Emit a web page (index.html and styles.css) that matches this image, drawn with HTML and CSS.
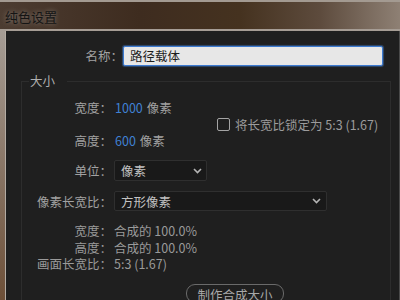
FILE: index.html
```html
<!DOCTYPE html>
<html lang="zh-CN">
<head>
  <meta charset="UTF-8">
  <title>纯色设置</title>
  <link rel="stylesheet" href="styles.css">
</head>
<body>
  <div class="window">
    <div class="titlebar">纯色设置</div>
    <div class="frame">
      <div class="dialog">
        <div class="name-row">
          <span class="label name-label">名称：</span>
          <div class="text-input">路径载体</div>
        </div>

        <fieldset class="group">
          <legend>大小</legend>

          <div class="dims-block">
            <div class="dims">
              <div class="row dim-row">
                <span class="label">宽度：</span>
                <span class="num">1000</span>
                <span class="unit">像素</span>
              </div>
              <div class="row dim-row">
                <span class="label">高度：</span>
                <span class="num">600</span>
                <span class="unit">像素</span>
              </div>
            </div>
            <label class="lock">
              <span class="checkbox"></span>
              将长宽比锁定为 5:3 (1.67)
            </label>
          </div>

          <div class="row unit-row">
            <span class="label">单位：</span>
            <div class="select select-unit">
              <span>像素</span>
              <svg width="9" height="6" viewBox="0 0 9 6"><path d="M1 1l3.5 3.5L8 1" stroke="#b4b4b4" stroke-width="1.6" fill="none"/></svg>
            </div>
          </div>

          <div class="row aspect-row">
            <span class="label">像素长宽比：</span>
            <div class="select select-aspect">
              <span>方形像素</span>
              <svg width="9" height="6" viewBox="0 0 9 6"><path d="M1 1l3.5 3.5L8 1" stroke="#b4b4b4" stroke-width="1.6" fill="none"/></svg>
            </div>
          </div>

          <div class="info">
            <div class="info-row"><span class="label">宽度：</span><span>合成的 100.0%</span></div>
            <div class="info-row"><span class="label">高度：</span><span>合成的 100.0%</span></div>
            <div class="info-row"><span class="label">画面长宽比：</span><span>5:3 (1.67)</span></div>
          </div>

          <button class="btn">制作合成大小</button>
        </fieldset>
      </div>
    </div>
  </div>
</body>
</html>
```

FILE: styles.css
```css
* {
  margin: 0;
  padding: 0;
  box-sizing: border-box;
}

body {
  width: 400px;
  height: 300px;
  overflow: hidden;
  background: #1f1f1f;
  font-family: "Noto Sans CJK SC", "Noto Sans", sans-serif;
  font-size: 12.5px;
  color: #a2a2a2;
}

.window {
  height: 300px;
  display: flex;
  flex-direction: column;
}

.titlebar {
  height: 29px;
  flex: none;
  padding-left: 5px;
  line-height: 29px;
  font-size: 13px;
  color: #151515;
  text-shadow: 0 0 5px rgba(255, 255, 255, 0.35);
  border-top: 2px solid #a39a91;
  background: linear-gradient(to right, #4c3c31 0%, #3e2c1f 35%, #45321f 60%, #5d4b3d 80%, #8e8074 100%);
}

.frame {
  flex: 1;
  display: flex;
  border-top: 2px solid #978e86;
  border-left: 5px solid #8a7a6c;
  border-image: linear-gradient(to bottom, #a69d95, #6c4e36) 1;
  border-right: 0;
  border-bottom: 0;
}

.dialog {
  flex: 1;
  background: #1f1f1f;
  border-left: 1px solid #b3aba3;
  border-right: 1px solid #4a4a4a;
}

.label {
  text-align: right;
  flex: none;
}

/* name */
.name-row {
  display: flex;
  align-items: center;
  padding-top: 15px;
}

.name-label {
  width: 117px;
  line-height: 20px;
}

.text-input {
  width: 260px;
  height: 20px;
  padding-left: 6px;
  line-height: 18px;
  color: #1d1d1d;
  background: #e7e7e7;
  border: 1px solid #3d7ad0;
  border-radius: 2px;
  box-shadow: 0 0 1px 1px rgba(70, 130, 210, 0.45);
}

/* size group */
.group {
  margin: 8px 8px 0 15px;
  padding: 3px 0 0 0;
  border: 1px solid #2d2d2d;
  border-bottom: 0;
}

.group legend {
  margin-left: 7px;
  padding: 0 12px 0 1px;
  line-height: 14px;
  color: #b0b0b0;
}

.row {
  display: flex;
  align-items: center;
}

.row .label,
.info-row .label {
  width: 90px;
}

.dims-block {
  display: flex;
  align-items: center;
}

.dims {
  width: 195px;
  flex: none;
}

.dim-row {
  height: 33px;
}

.num {
  margin-left: 3px;
  color: #3f81d4;
}

.unit {
  margin-left: 4px;
}

.lock {
  display: flex;
  align-items: center;
  gap: 5px;
  color: #9c9c9c;
}

.checkbox {
  width: 13px;
  height: 13px;
  border: 1.5px solid #a4a4a4;
  border-radius: 2px;
}

.unit-row {
  height: 27px;
}

.aspect-row {
  height: 32px;
  margin-top: 1px;
}

.select {
  height: 21px;
  margin-left: 2px;
  padding: 0 4px 0 6px;
  display: flex;
  align-items: center;
  justify-content: space-between;
  color: #c2c2c2;
  background: #191919;
  border: 1px solid #2f2f2f;
  border-radius: 2px;
}

.select-unit {
  width: 93px;
}

.select-aspect {
  width: 213px;
  height: 20px;
  padding-right: 5px;
}

.info {
  margin-top: 6px;
}

.info-row {
  display: flex;
  gap: 2px;
  line-height: 16.5px;
  color: #9a9a9a;
}

.btn {
  display: block;
  margin: 11px 0 0 164px;
  width: 98px;
  height: 19px;
  font: inherit;
  color: #a8a8a8;
  background: transparent;
  border: 1px solid #6a6a6a;
  border-radius: 9px;
}
```
